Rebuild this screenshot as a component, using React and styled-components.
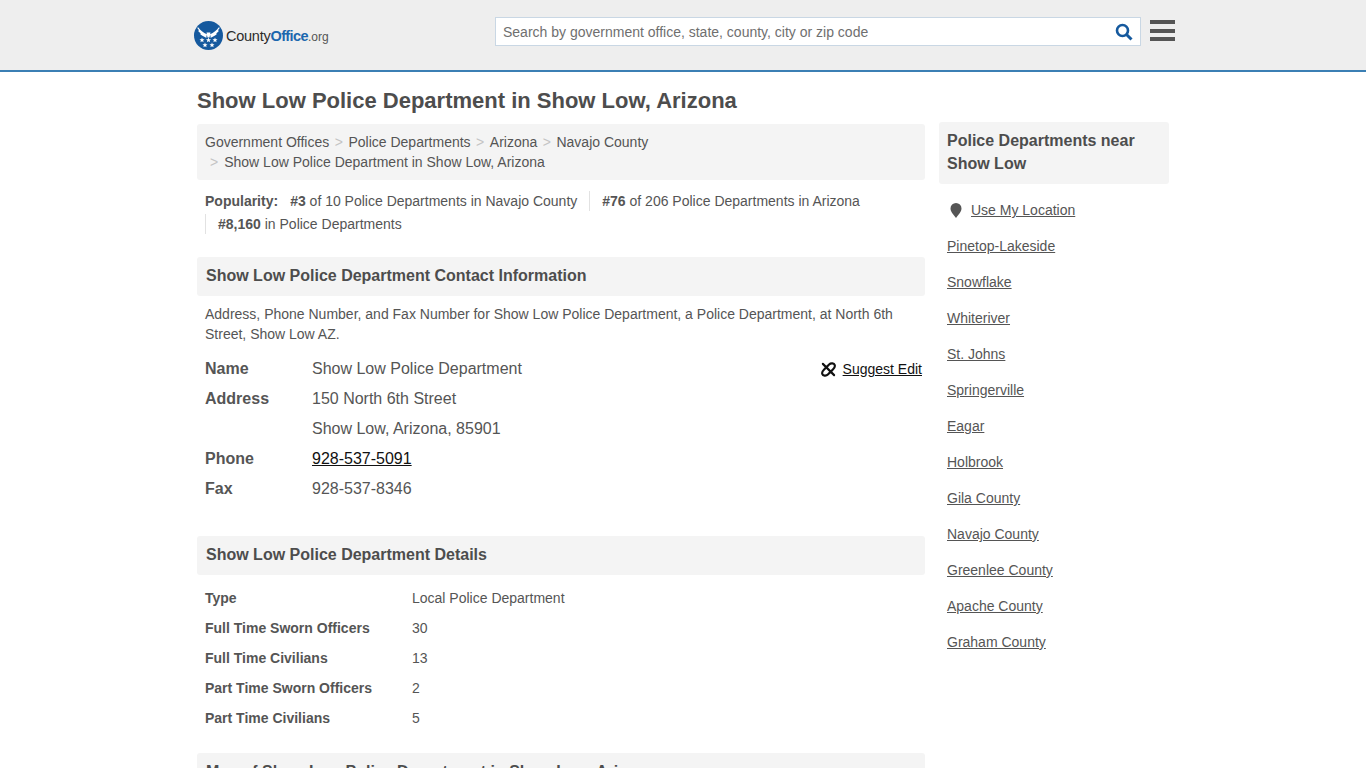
import React from 'react';
import styled, { createGlobalStyle } from 'styled-components';

const GlobalStyle = createGlobalStyle`
  html, body {
    margin: 0;
    padding: 0;
    background: #fff;
    color: #555;
    font-family: "Liberation Sans", Arial, sans-serif;
    font-size: 14px;
  }
`;

const Header = styled.header`
  height: 70px;
  background: #eeeeee;
  border-bottom: 2px solid #3b7fb4;
`;

const HeaderInner = styled.div`
  width: 981px;
  margin: 0 0 0 194px;
  height: 100%;
  display: flex;
  align-items: flex-start;
`;

const Logo = styled.a`
  display: flex;
  flex: none;
  align-items: center;
  width: 301px;
  margin-top: 21px;
  height: 29px;
  color: #2b2b2b;
  font-size: 14.5px;
  letter-spacing: -0.25px;
  svg { margin-right: 3px; }
  b { font-weight: 700; color: #1c67ae; letter-spacing: -0.6px; }
  small { font-size: 12px; color: #555; letter-spacing: 0; }
`;

const SearchBox = styled.div`
  flex: none;
  box-sizing: border-box;
  width: 646px;
  height: 29px;
  margin-top: 17px;
  background: #fff;
  border: 1px solid #c9d7e4;
  display: flex;
  align-items: center;
  justify-content: space-between;
  padding: 0 7px;
  color: #6f6f6f;
  font-size: 14px;
`;

const Burger = styled.div`
  flex: none;
  margin: 20px 0 0 9px;
  width: 25px;
  display: flex;
  flex-direction: column;
  gap: 4.5px;
  i {
    display: block;
    height: 4px;
    background: #555;
  }
`;

const Page = styled.div`
  width: 972px;
  margin-left: 197px;
`;

const Title = styled.h1`
  margin: 0;
  padding-top: 16px;
  height: 34px;
  font-size: 22px;
  line-height: 25px;
  font-weight: 700;
  color: #4d4d4d;
`;

const Columns = styled.div`
  display: flex;
  gap: 14px;
`;

const Main = styled.main`
  width: 728px;
`;

const Side = styled.aside`
  width: 230px;
`;

const Crumbs = styled.nav`
  margin-top: 2px;
  background: #f4f4f4;
  border-radius: 3px;
  padding: 8px;
  height: 56px;
  box-sizing: border-box;
  line-height: 20px;
  color: #555;
`;

const Sep = styled.span`
  color: #c4c4c4;
  margin: ${p => (p.$first ? '0 6px 0 5px' : '0 5.5px')};
`;

const Popularity = styled.div`
  padding: 10px 0 0 8px;
  line-height: 23px;
  height: 77px;
  box-sizing: border-box;
  b { font-weight: 700; }
`;

const Rank = styled.span`
  display: inline-block;
  line-height: 20px;
  margin-left: ${p => p.$ml || 0}px;
  padding-left: ${p => (p.$rule ? 12 : 0)}px;
  border-left: ${p => (p.$rule ? '1px solid #e2e2e2' : 'none')};
`;

const Section = styled.h2`
  margin: 0;
  height: 39px;
  padding: 0 9px;
  background: #f4f4f4;
  border-radius: 3px;
  font-size: 16px;
  font-weight: 700;
  line-height: 37px;
  color: #4d4d4d;
`;

const Intro = styled.p`
  margin: 0;
  padding: 8px 8px 0;
  line-height: 20px;
  height: 50px;
`;

const ContactWrap = styled.div`
  position: relative;
  padding: 0 8px;
  height: 182px;
`;

const SuggestEdit = styled.a`
  position: absolute;
  right: 3px;
  top: 7px;
  display: flex;
  align-items: center;
  gap: 7px;
  color: #111;
  text-decoration: underline;
`;

const ContactRow = styled.div`
  display: flex;
  height: 30px;
  line-height: 30px;
  font-size: 16px;
`;

const ContactLabel = styled.div`
  width: 107px;
  font-weight: 700;
`;

const PhoneLink = styled.a`
  color: #111;
  text-decoration: underline;
`;

const Details = styled.div`
  padding: 8px 0 10px 8px;
  height: 160px;
`;

const DetailRow = styled.div`
  display: flex;
  height: 30px;
  line-height: 30px;
`;

const DetailLabel = styled.div`
  width: 207px;
  font-weight: 700;
`;

const SideTitle = styled.h3`
  margin: 0;
  height: 62px;
  box-sizing: border-box;
  padding: 7px 8px;
  background: #f4f4f4;
  border-radius: 3px;
  font-size: 16px;
  line-height: 23px;
  font-weight: 700;
  color: #4d4d4d;
`;

const SideList = styled.div`
  padding: 8px 0 0 8px;
`;

const SideLink = styled.a`
  display: flex;
  align-items: center;
  height: 36px;
  color: #555;
  text-decoration: underline;
  svg { margin: 0 9px 0 3px; }
`;

const LocationLink = styled(SideLink)`
  text-decoration: none;
  span { text-decoration: underline; }
`;

const nearby = ['Pinetop-Lakeside', 'Snowflake', 'Whiteriver', 'St. Johns', 'Springerville', 'Eagar', 'Holbrook', 'Gila County', 'Navajo County', 'Greenlee County', 'Apache County', 'Graham County'];

const details = [
  ['Type', 'Local Police Department'],
  ['Full Time Sworn Officers', '30'],
  ['Full Time Civilians', '13'],
  ['Part Time Sworn Officers', '2'],
  ['Part Time Civilians', '5'],
];

const stars = [[8, 19], [14.5, 19], [21, 19], [11, 24], [18, 24]];

const LogoMark = () => (
  <svg width="29" height="29" viewBox="0 0 29 29">
    <circle cx="14.5" cy="14.5" r="14.5" fill="#15599e" />
    <g fill="none" stroke="#fff" strokeWidth="1.3" strokeLinecap="round">
      <path d="M4 7c2 3 5 5 9 7M5 10c2 2 4 3 7 5M7 13c1 1 3 2 5 3" />
      <path d="M25 7c-2 3-5 5-9 7M24 10c-2 2-4 3-7 5M22 13c-1 1-3 2-5 3" />
    </g>
    <path d="M12.5 11.500h4l-1 5h-2z" fill="#fff" />
    {stars.map(([x, y]) => (
      <path
        key={`${x}-${y}`}
        transform={`translate(${x} ${y})`}
        d="M0-2.600.7-.8 2.500-.8 1.100.4 1.600 2.200 0 1.200-1.600 2.200-1.100.4-2.500-.8-.7-.8z"
        fill="#fff"
      />
    ))}
  </svg>
);

export default function App() {
  return (
    <>
      <GlobalStyle />
      <Header>
        <HeaderInner>
          <Logo>
            <LogoMark />
            <span>County<b>Office</b><small>.org</small></span>
          </Logo>
          <SearchBox>
            <span>Search by government office, state, county, city or zip code</span>
            <svg width="18" height="18" viewBox="0 0 18 18" fill="none" stroke="#15599e">
              <circle cx="7.500" cy="7.500" r="5.500" strokeWidth="2.600" />
              <path d="M11.500 11.500L16.500 16.500" strokeWidth="3" />
            </svg>
          </SearchBox>
          <Burger><i /><i /><i /></Burger>
        </HeaderInner>
      </Header>
      <Page>
        <Title>Show Low Police Department in Show Low, Arizona</Title>
        <Columns>
          <Main>
            <Crumbs>
              Government Offices<Sep>&gt;</Sep>Police Departments<Sep>&gt;</Sep>Arizona<Sep>&gt;</Sep>Navajo County
              <br />
              <Sep $first>&gt;</Sep>Show Low Police Department in Show Low, Arizona
            </Crumbs>
            <Popularity>
              <b>Popularity:</b>
              <Rank $ml={12}><b>#3</b> of 10 Police Departments in Navajo County</Rank>
              <Rank $ml={12} $rule><b>#76</b> of 206 Police Departments in Arizona</Rank>
              <br />
              <Rank $rule><b>#8,160</b> in Police Departments</Rank>
            </Popularity>
            <Section>Show Low Police Department Contact Information</Section>
            <Intro>Address, Phone Number, and Fax Number for Show Low Police Department, a Police Department, at North 6th Street, Show Low AZ.</Intro>
            <ContactWrap>
              <SuggestEdit>
                <svg width="15" height="15" viewBox="0 0 24 24" fill="none" stroke="#111" strokeWidth="3.400" strokeLinecap="round">
                  <path d="M3 3l18 18" />
                  <path d="M8 9l5-5c3-3 8-2 9 1s-1 5-3 7l-4 4" />
                  <path d="M16 15l-5 5c-3 3-8 2-9-1s1-5 3-7l4-4" />
                </svg>
                Suggest Edit
              </SuggestEdit>
              <ContactRow><ContactLabel>Name</ContactLabel><div>Show Low Police Department</div></ContactRow>
              <ContactRow><ContactLabel>Address</ContactLabel><div>150 North 6th Street</div></ContactRow>
              <ContactRow><ContactLabel /><div>Show Low, Arizona, 85901</div></ContactRow>
              <ContactRow><ContactLabel>Phone</ContactLabel><PhoneLink>928-537-5091</PhoneLink></ContactRow>
              <ContactRow><ContactLabel>Fax</ContactLabel><div>928-537-8346</div></ContactRow>
            </ContactWrap>
            <Section>Show Low Police Department Details</Section>
            <Details>
              {details.map(([k, v]) => (
                <DetailRow key={k}><DetailLabel>{k}</DetailLabel><div>{v}</div></DetailRow>
              ))}
            </Details>
            <Section>Map of Show Low Police Department in Show Low, Arizona</Section>
          </Main>
          <Side>
            <SideTitle>Police Departments near Show Low</SideTitle>
            <SideList>
              <LocationLink>
                <svg width="12" height="15" viewBox="0 0 12 15"><path d="M6 15C3 11 .500 8.500.500 5.500a5.500 5.500 0 0 1 11 0C11.500 8.500 9 11 6 15z" fill="#555" /></svg>
                <span>Use My Location</span>
              </LocationLink>
              {nearby.map(n => <SideLink key={n}>{n}</SideLink>)}
            </SideList>
          </Side>
        </Columns>
      </Page>
    </>
  );
}
